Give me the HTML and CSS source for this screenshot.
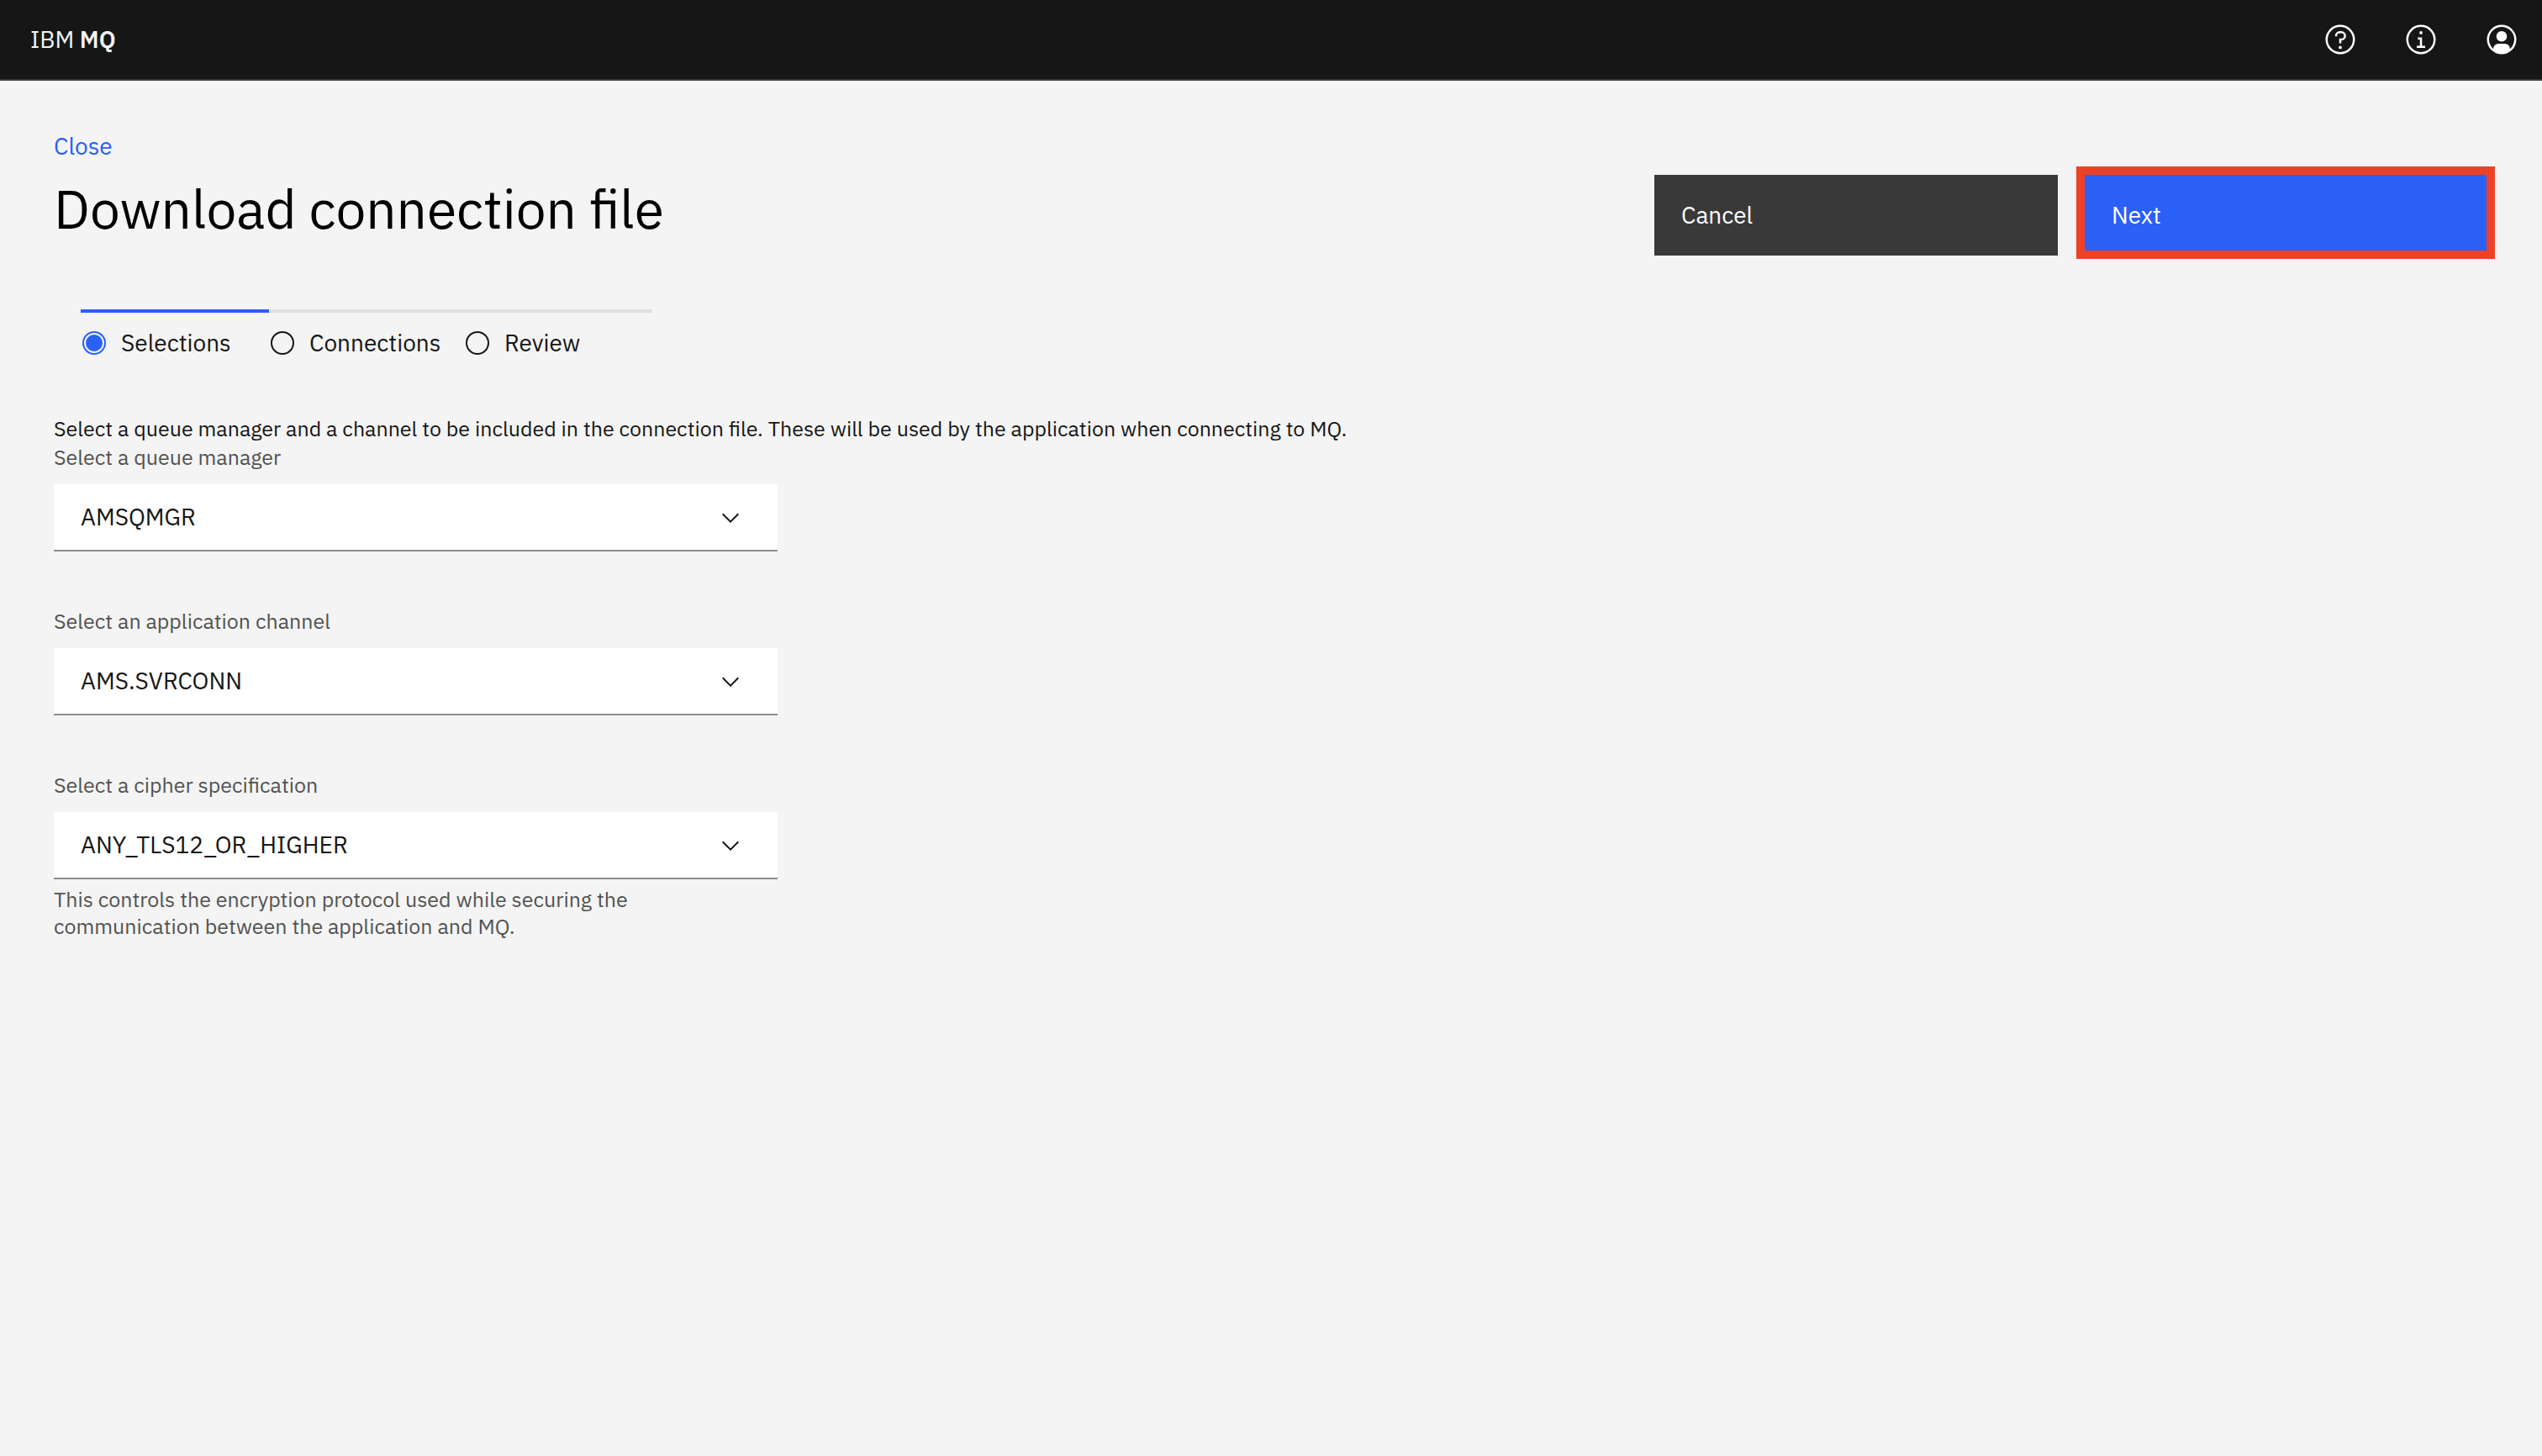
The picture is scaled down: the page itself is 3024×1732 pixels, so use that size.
FILE: index.html
```html
<!DOCTYPE html>
<html lang="en">
<head>
<meta charset="utf-8">
<title>IBM MQ - Download connection file</title>
<link rel="stylesheet" href="styles.css">
</head>
<body>
<header class="header">
  <a class="brand" href="#">IBM <strong>MQ</strong></a>
  <nav class="header-actions" aria-label="Global actions">
    <button class="header-action" type="button" aria-label="Help">
      <svg viewBox="0 0 32 32"><path d="M16,2A14,14,0,1,0,30,16,14,14,0,0,0,16,2Zm0,26A12,12,0,1,1,28,16,12,12,0,0,1,16,28Z"/><circle cx="16" cy="23.5" r="1.5"/><path d="M17,8H15.5A4.49,4.49,0,0,0,11,12.5V13h2v-.5A2.5,2.5,0,0,1,15.5,10H17a2.5,2.5,0,0,1,0,5H15v4.5h2V17a4.5,4.5,0,0,0,0-9Z"/></svg>
    </button>
    <button class="header-action" type="button" aria-label="Information">
      <svg viewBox="0 0 32 32"><path d="M17,22V14H13v2h2v6H12v2h8V22Z"/><path d="M16,8a1.5,1.5,0,1,0,1.5,1.5A1.5,1.5,0,0,0,16,8Z"/><path d="M16,30A14,14,0,1,1,30,16,14,14,0,0,1,16,30ZM16,4A12,12,0,1,0,28,16,12,12,0,0,0,16,4Z"/></svg>
    </button>
    <button class="header-action" type="button" aria-label="Account">
      <svg viewBox="0 0 32 32"><path d="M16,8a5,5,0,1,0,5,5A5,5,0,0,0,16,8Z"/><path d="M16,2A14,14,0,1,0,30,16,14.0158,14.0158,0,0,0,16,2Zm7.9925,22.9258A5.0016,5.0016,0,0,0,19,20H13a5.0016,5.0016,0,0,0-4.9925,4.9258,12,12,0,1,1,15.985,0Z"/></svg>
    </button>
  </nav>
</header>

<main class="page">
  <div class="page-head">
    <div class="page-heading">
      <a class="close" href="#">Close</a>
      <h1 class="title">Download connection file</h1>
    </div>
    <div class="page-actions">
      <button class="button button-secondary" type="button">Cancel</button>
      <button class="button button-primary" type="submit" form="connection-form">Next</button>
    </div>
  </div>

  <form id="connection-form">
    <div class="steps" role="radiogroup" aria-label="Progress">
      <label class="step"><input class="step-radio" type="radio" name="step" checked>Selections</label>
      <label class="step step-wide"><input class="step-radio" type="radio" name="step">Connections</label>
      <label class="step"><input class="step-radio" type="radio" name="step">Review</label>
    </div>

    <p class="intro">Select a queue manager and a channel to be included in the connection file. These will be used by the application when connecting to MQ.</p>

    <div class="fields">
      <div class="field">
        <label class="field-label" for="queue-manager">Select a queue manager</label>
        <div class="select-box">
          <select class="select" id="queue-manager"><option>AMSQMGR</option></select>
          <svg class="chevron" viewBox="0 0 16 16"><path d="M8 11L3 6l.7-.7L8 9.600l4.300-4.300.7.7z"/></svg>
        </div>
      </div>
      <div class="field">
        <label class="field-label" for="channel">Select an application channel</label>
        <div class="select-box">
          <select class="select" id="channel"><option>AMS.SVRCONN</option></select>
          <svg class="chevron" viewBox="0 0 16 16"><path d="M8 11L3 6l.7-.7L8 9.600l4.300-4.300.7.7z"/></svg>
        </div>
      </div>
      <div class="field">
        <label class="field-label" for="cipher">Select a cipher specification</label>
        <div class="select-box">
          <select class="select" id="cipher" aria-describedby="cipher-help"><option>ANY_TLS12_OR_HIGHER</option></select>
          <svg class="chevron" viewBox="0 0 16 16"><path d="M8 11L3 6l.7-.7L8 9.600l4.300-4.300.7.7z"/></svg>
        </div>
        <p class="help" id="cipher-help">This controls the encryption protocol used while securing the communication between the application and MQ.</p>
      </div>
    </div>
  </form>
</main>
</body>
</html>
```
FILE: styles.css
```css
* {
  box-sizing: border-box;
}

body {
  margin: 0;
  background: #f4f4f4;
  color: #161616;
  font-family: "IBM Plex Sans", "Noto Sans", sans-serif;
  font-size: 28px;
  line-height: 36px;
}

button,
select {
  font: inherit;
}

.header {
  display: flex;
  align-items: center;
  justify-content: space-between;
  height: 96px;
  padding-left: 36px;
  border-bottom: 2px solid #393939;
  background: #161616;
}

.brand {
  color: #f4f4f4;
  text-decoration: none;
}

.brand strong {
  font-weight: 600;
}

.header-actions {
  display: flex;
}

.header-action {
  display: grid;
  place-items: center;
  width: 96px;
  height: 96px;
  padding: 0;
  border: 0;
  background: none;
}

.header-action svg {
  width: 40px;
  height: 40px;
  fill: #fff;
}

.page {
  padding: 60px 64px;
}

.page-head {
  display: flex;
  justify-content: space-between;
}

.close {
  display: block;
  width: max-content;
  color: #2a60f6;
  text-decoration: none;
}

.title {
  margin: 16px 0 0;
  color: #000;
  font-size: 64px;
  font-weight: 400;
  line-height: 80px;
}

.page-actions {
  display: flex;
  gap: 32px;
  padding-top: 52px;
}

.button {
  width: 480px;
  height: 96px;
  padding: 0 32px;
  border: 0;
  color: #fff;
  text-align: left;
}

.button-secondary {
  background: #393939;
}

.button-primary {
  position: relative;
  background: #2a60f6;
}

/* highlight frame over the primary action */
.button-primary::after {
  content: "";
  position: absolute;
  inset: -10px -8px -4px -10px;
  border: 10px solid #ec4127;
  pointer-events: none;
}

.steps {
  display: flex;
  padding: 64px 32px 0;
}

.step {
  display: flex;
  align-items: center;
  gap: 18px;
  width: 224px;
  height: 76px;
  padding-left: 2px;
  border-top: 4px solid #e0e0e0;
}

.step-wide {
  width: 232px;
}

.step:has(:checked) {
  border-color: #2a60f6;
}

.step-radio {
  flex: none;
  appearance: none;
  width: 28px;
  height: 28px;
  margin: 0;
  border: 2px solid #161616;
  border-radius: 50%;
}

.step-radio:checked {
  border-color: #2a60f6;
  background: #2a60f6 content-box;
  padding: 2px;
}

.intro {
  margin: 48px 0 0;
  font-size: 25px;
}

.fields {
  display: flex;
  flex-direction: column;
  gap: 67px;
  width: 100%;
  max-width: 861px;
}

.field-label {
  display: block;
  margin-bottom: 16px;
  color: #525252;
  font-size: 25px;
  line-height: 32px;
}

.select-box {
  display: grid;
  align-items: center;
}

.select-box > * {
  grid-area: 1 / 1;
}

.select {
  appearance: none;
  width: 100%;
  height: 80px;
  padding: 0 96px 0 32px;
  border: 0;
  border-bottom: 2px solid #8d8d8d;
  border-radius: 0;
  background: #fff;
  color: #161616;
}

.chevron {
  justify-self: end;
  width: 32px;
  height: 32px;
  margin-right: 40px;
  fill: #161616;
  pointer-events: none;
}

.help {
  max-width: 768px;
  margin: 8px 0 0;
  color: #525252;
  font-size: 25px;
  line-height: 32px;
}
```
